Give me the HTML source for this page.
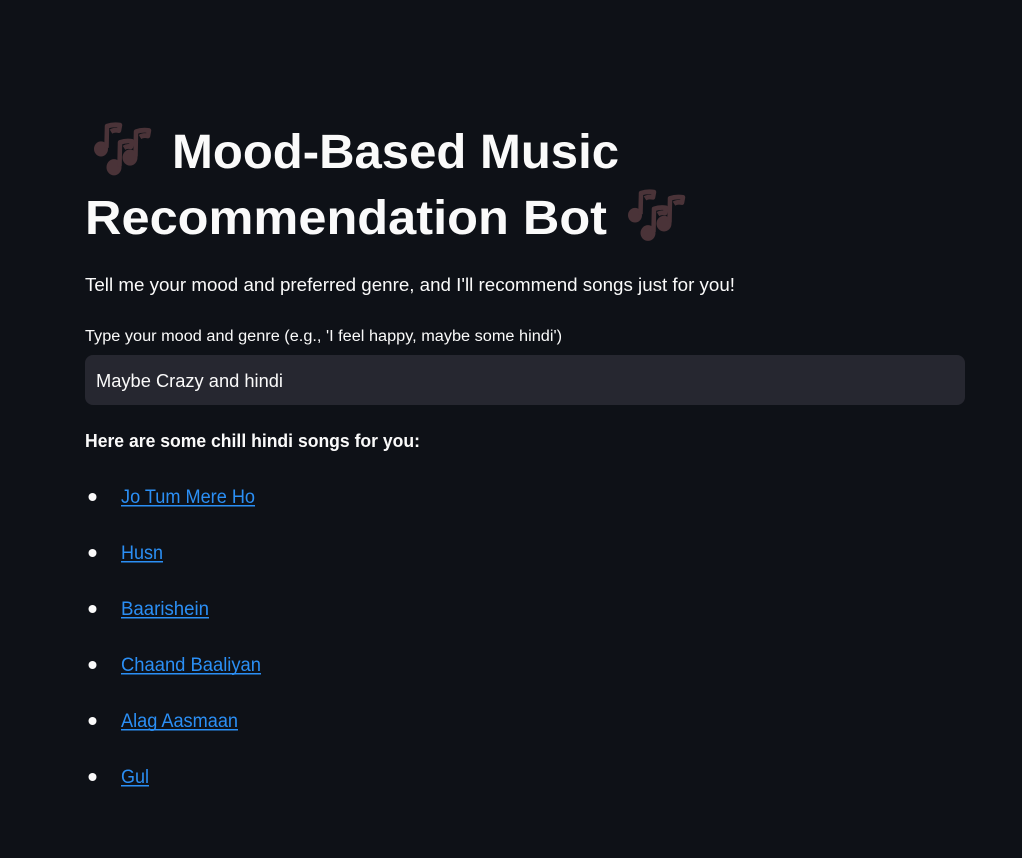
<!DOCTYPE html>
<html><head><meta charset="utf-8"><style>
html,body{margin:0;padding:0;background:#0e1117;width:1022px;height:858px;overflow:hidden}
svg{display:block}
</style></head><body>
<svg width="1022" height="858" viewBox="0 0 1022 858" xmlns="http://www.w3.org/2000/svg" font-family="Liberation Sans, sans-serif">
<defs>
<g id="notes" fill="#4a3338" stroke="#4a3338">
  <circle cx="8" cy="24" r="7" stroke="none"/>
  <path d="M13.5 23 L14 3 Q20 1 27 2 L26 7 Q21 6 18 8" fill="none" stroke-width="4.5" stroke-linejoin="round"/>
  <circle cx="21" cy="41" r="7.5" stroke="none"/>
  <path d="M26.5 40 L27 18 Q33 16 39 17 L38 22 Q34 21 31 23" fill="none" stroke-width="4.5" stroke-linejoin="round"/>
  <circle cx="37" cy="32" r="7.5" stroke="none"/>
  <path d="M42.5 31 L43 8 Q49 6 56 7 L55 12 Q50 11 47 13" fill="none" stroke-width="4.5" stroke-linejoin="round"/>
</g>
</defs>
<use href="#notes" transform="translate(93,123) scale(1,1.08)"/>
<use href="#notes" transform="translate(627,190) scale(1,1.05)"/>
<g fill="#fafafa" font-weight="bold">
<text x="172" y="168" font-size="48" textLength="447" lengthAdjust="spacingAndGlyphs">Mood-Based Music</text>
<text x="85" y="234" font-size="48" textLength="522" lengthAdjust="spacingAndGlyphs">Recommendation Bot</text>
</g>
<text x="85" y="291" font-size="18" fill="#fafafa" textLength="650" lengthAdjust="spacingAndGlyphs">Tell me your mood and preferred genre, and I'll recommend songs just for you!</text>
<text x="85" y="341" font-size="15.5" fill="#fafafa" textLength="477" lengthAdjust="spacingAndGlyphs">Type your mood and genre (e.g., 'I feel happy, maybe some hindi')</text>
<rect x="85" y="355" width="880" height="50" rx="8" fill="#262730"/>
<text x="96" y="387" font-size="18" fill="#fafafa" textLength="187" lengthAdjust="spacingAndGlyphs">Maybe Crazy and hindi</text>
<text x="85" y="447" font-size="18" font-weight="bold" fill="#fafafa" textLength="335" lengthAdjust="spacingAndGlyphs">Here are some chill hindi songs for you:</text>
<g fill="#fafafa">
<circle cx="92.5" cy="497" r="4"/><circle cx="92.5" cy="553" r="4"/><circle cx="92.5" cy="609" r="4"/>
<circle cx="92.5" cy="665" r="4"/><circle cx="92.5" cy="721" r="4"/><circle cx="92.5" cy="777" r="4"/>
</g>
<g fill="#2b8ff5" font-size="19">
<text x="121" y="503" textLength="134" lengthAdjust="spacingAndGlyphs">Jo Tum Mere Ho</text>
<text x="121" y="559" textLength="42" lengthAdjust="spacingAndGlyphs">Husn</text>
<text x="121" y="615" textLength="88" lengthAdjust="spacingAndGlyphs">Baarishein</text>
<text x="121" y="671" textLength="140" lengthAdjust="spacingAndGlyphs">Chaand Baaliyan</text>
<text x="121" y="727" textLength="117" lengthAdjust="spacingAndGlyphs">Alag Aasmaan</text>
<text x="121" y="783" textLength="28" lengthAdjust="spacingAndGlyphs">Gul</text>
<rect x="121" y="505" width="134" height="1.5"/>
<rect x="121" y="561" width="42" height="1.5"/>
<rect x="121" y="617" width="88" height="1.5"/>
<rect x="121" y="673" width="140" height="1.5"/>
<rect x="121" y="729" width="117" height="1.5"/>
<rect x="121" y="785" width="28" height="1.5"/>
</g>
</svg>
</body></html>
